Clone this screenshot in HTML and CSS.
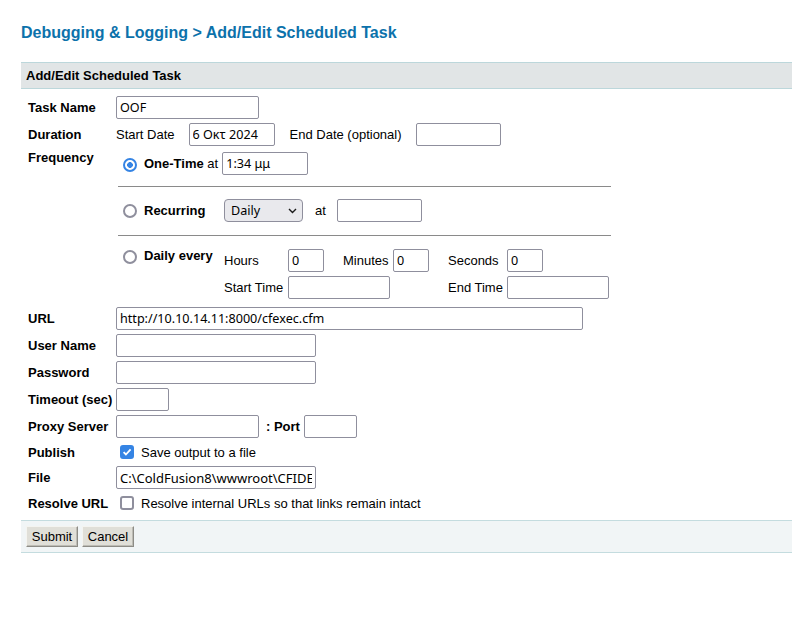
FILE: index.html
```html
<!DOCTYPE html>
<html>
<head>
<meta charset="utf-8">
<title>Add/Edit Scheduled Task</title>
<link rel="stylesheet" href="styles.css">
</head>
<body>
<h1 class="title">Debugging &amp; Logging &gt; Add/Edit Scheduled Task</h1>
<div class="bar">Add/Edit Scheduled Task</div>
<form class="form">
  <div class="lbl">Task Name</div>
  <div class="val"><input class="txt w143" value="OOF"></div>

  <div class="lbl">Duration</div>
  <div class="val">
    <span class="pre">Start Date</span>
    <input class="txt w86" value="6 Οκτ 2024">
    <span class="pre2">End Date (optional)</span>
    <input class="txt w85" value="">
  </div>

  <div class="lbl top">Frequency</div>
  <div class="freq">
    <div class="frow">
      <span class="radio on"></span>
      <span class="ftext"><b>One-Time</b> at</span>
      <input class="txt w86" value="1:34 μμ">
    </div>
    <div class="rule rule1"></div>
    <div class="frow">
      <div class="fhead"><span class="radio"></span><b>Recurring</b></div>
      <span class="sel"><select class="select"><option>Daily</option><option>Weekly</option><option>Monthly</option></select><svg class="chev" width="9" height="6" viewBox="0 0 9 6"><path d="M1 1l3.5 3.5L8 1" fill="none" stroke="#1b1b1b" stroke-width="1.4"/></svg></span>
      <span class="at">at</span>
      <input class="txt w85" value="">
    </div>
    <div class="rule rule2"></div>
    <div class="frow top">
      <div class="fhead"><span class="radio"></span><b>Daily every</b></div>
      <div class="every">
        <span>Hours</span><input class="txt w36" value="0">
        <span>Minutes</span><input class="txt w36" value="0">
        <span>Seconds</span><input class="txt w36" value="0">
        <span>Start Time</span><input class="txt w102 span2" value="">
        <span class="c5">End Time</span><input class="txt w102" value="">
      </div>
    </div>
  </div>

  <div class="lbl">URL</div>
  <div class="val"><input class="txt w467" value="http://10.10.14.11:8000/cfexec.cfm"></div>

  <div class="lbl">User Name</div>
  <div class="val"><input class="txt w200" value=""></div>

  <div class="lbl">Password</div>
  <div class="val"><input class="txt w200" type="password" value=""></div>

  <div class="lbl">Timeout (sec)</div>
  <div class="val"><input class="txt w53" value=""></div>

  <div class="lbl">Proxy Server</div>
  <div class="val"><input class="txt w143" value=""><b class="port">: Port</b><input class="txt w53" value=""></div>

  <div class="lbl">Publish</div>
  <div class="val chk-row"><span class="check on"><svg width="10" height="10" viewBox="0 0 10 10"><path d="M1.6 5.2l2.3 2.3L8.6 2.4" fill="none" stroke="#fff" stroke-width="1.8"/></svg></span>Save output to a file</div>

  <div class="lbl">File</div>
  <div class="val"><input class="txt w200 file" value="C:\ColdFusion8\wwwroot\CFIDE"></div>

  <div class="lbl">Resolve URL</div>
  <div class="val chk-row"><span class="check"></span>Resolve internal URLs so that links remain intact</div>
</form>
<div class="footer">
  <button type="button" class="btn">Submit</button>
  <button type="button" class="btn">Cancel</button>
</div>
</body>
</html>
```

FILE: styles.css
```css
html, body {
  margin: 0;
  padding: 0;
  background: #fff;
}
body {
  padding-left: 21px;
  font-family: "Liberation Sans", Arial, sans-serif;
  font-size: 13px;
  color: #000;
}
.title {
  margin: 24px 0 20px;
  font-size: 16px;
  line-height: 18px;
  font-weight: bold;
  color: #0c72ab;
}
.bar {
  background: #e1e5e6;
  border-top: 1px solid #bcd7db;
  border-bottom: 1px solid #bcd7db;
  height: 25px;
  line-height: 25px;
  padding-left: 5px;
  font-weight: bold;
}
.form {
  display: grid;
  grid-template-columns: 88px 1fr;
  row-gap: 4px;
  align-items: center;
  padding: 7px 0 7px 7px;
  margin: 0;
}
.lbl {
  font-weight: bold;
  line-height: 15px;
}
.lbl.top {
  align-self: start;
}
.val {
  display: flex;
  align-items: center;
  min-height: 20px;
}
.txt {
  box-sizing: border-box;
  height: 23px;
  border: 1px solid #8f8f9d;
  border-radius: 2px;
  padding: 0 3px;
  margin: 0;
  font-family: "Noto Sans", "Open Sans", sans-serif;
  font-size: 12.6px;
  color: #000;
  background: #fff;
  outline: none;
}
.txt.file {
  font-size: 13px;
}
.w36 { width: 36px; }
.w53 { width: 53px; }
.w85 { width: 85px; }
.w86 { width: 86px; }
.w102 { width: 102px; }
.w143 { width: 143px; }
.w200 { width: 200px; }
.w467 { width: 467px; }
.pre { margin-right: 14px; }
.pre2 { margin: 0 14px 0 15px; }
.port { margin: 0 4px 0 7px; }

.freq {
  display: flex;
  flex-direction: column;
  padding: 2px 0 4px 2px;
}
.frow {
  display: flex;
  align-items: center;
  height: 23px;
}
.frow.top {
  align-items: flex-start;
  height: auto;
}
.fhead {
  width: 106px;
  display: flex;
  align-items: center;
  flex: none;
}
.frow.top .fhead {
  margin-top: -1px;
  align-items: flex-start;
}
.radio {
  box-sizing: border-box;
  width: 14px;
  height: 14px;
  border: 2px solid #8f8f9d;
  border-radius: 50%;
  margin: 0 7px 0 5px;
  flex: none;
  background: #fff;
}
.radio.on {
  border-color: #3584e4;
  background: radial-gradient(circle, #3584e4 0 2.6px, #fff 3.1px);
  margin-top: 2px;
}
.frow.top .radio {
  margin-top: 2px;
}
.ftext {
  margin-right: 4px;
}
.rule {
  width: 493px;
  border-top: 1px solid #8a8a8a;
}
.rule1 { margin: 11px 0 12px; }
.rule2 { margin: 13px 0 13px; }
.sel {
  position: relative;
  display: inline-flex;
}
.select {
  appearance: none;
  -webkit-appearance: none;
  box-sizing: border-box;
  width: 79px;
  height: 23px;
  border: 1px solid #8f8f9d;
  border-radius: 4px;
  background: #e9e9ed;
  padding: 0 6px;
  margin: 0;
  font-family: "Noto Sans", "Open Sans", sans-serif;
  font-size: 12.6px;
  color: #000;
}
.chev {
  position: absolute;
  left: 64px;
  top: 9px;
  pointer-events: none;
}
.at {
  margin: 0 11px 0 12px;
}
.every {
  display: grid;
  grid-template-columns: 64px 55px 50px 55px 59px auto;
  grid-auto-rows: 23px;
  row-gap: 4px;
  align-items: center;
}
.every .span2 {
  grid-column: span 2;
}
.every .c5 {
  grid-column: 5;
}
.chk-row {
  height: 20px;
}
.check {
  box-sizing: border-box;
  width: 14px;
  height: 14px;
  border: 2px solid #8f8f9d;
  border-radius: 3px;
  margin: 0 7px 0 4px;
  background: #fff;
  display: inline-flex;
  align-items: center;
  justify-content: center;
  flex: none;
}
.check.on {
  background: #3584e4;
  border-color: #3584e4;
}
.footer {
  background: #f1f5f6;
  border-top: 1px solid #c4dcdf;
  border-bottom: 1px solid #c4dcdf;
  padding: 5px;
  display: flex;
  gap: 4px;
}
.btn {
  box-sizing: border-box;
  height: 21px;
  width: 52px;
  padding: 0;
  margin: 0;
  font-family: "Liberation Sans", Arial, sans-serif;
  font-size: 13px;
  color: #000;
  background: #e0dfd8;
  border: 1px solid;
  border-color: #f4f4f0 #8d8c86 #8d8c86 #f4f4f0;
  box-shadow: inset -1px -1px 0 #bdbcb5;
  border-radius: 0;
}
```
